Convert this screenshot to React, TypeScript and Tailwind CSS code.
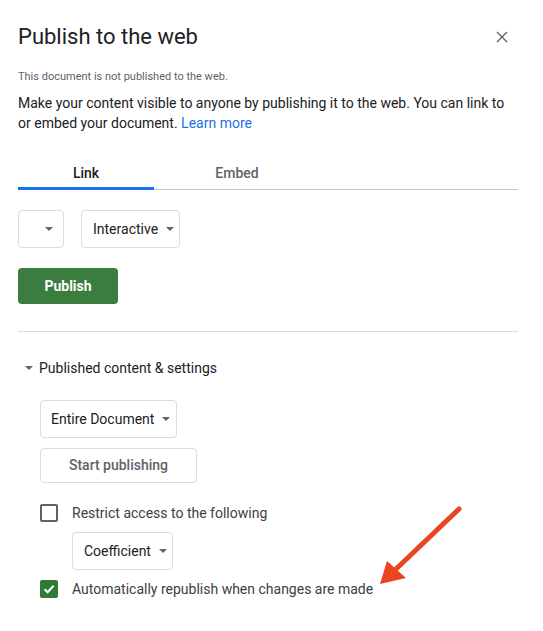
import React from "react";

function Caret({ className = "" }: { className?: string }) {
  return (
    <svg width="8" height="4" viewBox="0 0 8 4" className={className}>
      <path d="M0 0 L8 0 L4 4 Z" fill="#5f6368" />
    </svg>
  );
}

function Dropdown({ label, className = "" }: { label?: string; className?: string }) {
  return (
    <div
      className={`h-[38px] flex items-center border border-[#dadce0] rounded-[4px] bg-white ${className}`}
    >
      {label && <span className="text-[14px] leading-[20px] text-[#202124]">{label}</span>}
      <Caret className="ml-[8px]" />
    </div>
  );
}

function Checkbox({ checked }: { checked?: boolean }) {
  if (checked) {
    return (
      <div className="w-[18px] h-[18px] rounded-[2px] bg-[#2f7a37] flex items-center justify-center shrink-0">
        <svg width="14" height="14" viewBox="0 0 14 14">
          <path d="M2.5 7.2 L5.6 10.2 L11.6 3.8" fill="none" stroke="white" strokeWidth="2" />
        </svg>
      </div>
    );
  }
  return <div className="w-[18px] h-[18px] rounded-[2px] border-2 border-[#5f6368] shrink-0" />;
}

export default function App() {
  return (
    <div className="relative w-[543px] h-[631px] bg-white pl-[18px] pr-[25px] pt-[23px] font-['Roboto',sans-serif] overflow-hidden">
      {/* Title */}
      <div className="h-[28px] flex items-center justify-between">
        <h1 className="text-[22px] leading-[28px] text-[#202124] font-normal">Publish to the web</h1>
        <svg width="12" height="12" viewBox="0 0 12 12" className="mr-[10px]">
          <path d="M1 1 L11 11 M11 1 L1 11" stroke="#5f6368" strokeWidth="1.4" />
        </svg>
      </div>

      <p className="mt-[18px] text-[11px] leading-[16px] text-[#5f6368]">
        This document is not published to the web.
      </p>
      <p className="mt-[8px] text-[14px] leading-[20px] text-[#202124]">
        Make your content visible to anyone by publishing it to the web. You can link to
        <br />
        or embed your document. <span className="text-[#1a73e8]">Learn more</span>
      </p>

      {/* Tabs */}
      <div className="mt-[27px] flex border-b border-[#c4c7c5]">
        <div className="w-[136px] h-[30px] -mb-px flex items-center justify-center border-b-[3px] border-[#1a73e8] text-[14px] font-medium text-[#202124]">
          Link
        </div>
        <div className="w-[166px] h-[30px] -mb-px flex items-center justify-center border-b-[3px] border-transparent text-[14px] font-medium text-[#5f6368]">
          Embed
        </div>
      </div>

      {/* Dropdowns */}
      <div className="mt-[20px] flex gap-[17px]">
        <Dropdown className="w-[46px] justify-end pr-[10px]" />
        <Dropdown label="Interactive" className="w-[99px] pl-[11px]" />
      </div>

      <button className="mt-[20px] w-[100px] h-[36px] rounded-[4px] bg-[#3a7d3e] text-white text-[14px] font-bold flex items-center justify-center">
        Publish
      </button>

      <div className="mt-[27px] h-px bg-[#dadce0]" />

      {/* Published content */}
      <div className="mt-[26px] flex items-center h-[20px]">
        <Caret className="ml-[7px]" />
        <span className="ml-[6px] text-[14px] leading-[20px] text-[#202124]">
          Published content &amp; settings
        </span>
      </div>

      <div className="pl-[22px]">
        <Dropdown label="Entire Document" className="mt-[22px] w-[137px] pl-[10px]" />
        <button className="mt-[10px] w-[157px] h-[35px] rounded-[4px] border border-[#dadce0] text-[14px] font-medium text-[#5f6368] flex items-center justify-center">
          Start publishing
        </button>

        <div className="mt-[20px] flex items-center gap-[14px]">
          <Checkbox />
          <span className="text-[14px] leading-[20px] text-[#3c4043]">Restrict access to the following</span>
        </div>
        <div className="pl-[32px]">
          <Dropdown label="Coefficient" className="mt-[9px] w-[101px] pl-[11px]" />
        </div>
        <div className="mt-[9px] flex items-center gap-[14px]">
          <Checkbox checked />
          <span className="text-[14px] leading-[20px] text-[#3c4043]">
            Automatically republish when changes are made
          </span>
        </div>
      </div>

      {/* Annotation arrow */}
      <svg
        className="absolute left-0 top-0 pointer-events-none"
        width="543"
        height="631"
        viewBox="0 0 543 631"
      >
        <line x1="459" y1="509" x2="395" y2="570" stroke="#e8461f" strokeWidth="5" strokeLinecap="round" />
        <polygon points="380,584 387,561 406,578" fill="#e8461f" />
      </svg>
    </div>
  );
}
